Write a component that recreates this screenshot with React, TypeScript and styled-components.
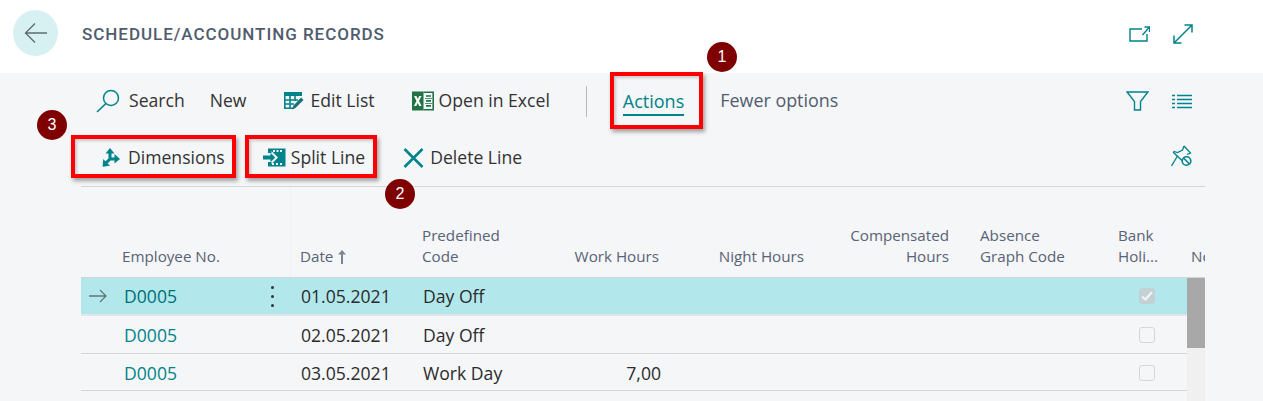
import React from "react";
import styled, { createGlobalStyle } from "styled-components";

const TEAL = "#00838a";
const COLUMNS = "41px 132px 37px 131px 118px 121px 145px 145px 167px 69px";

const GlobalStyle = createGlobalStyle`
  html, body {
    margin: 0;
    padding: 0;
    background: #f5f6f8;
  }
  body {
    font-family: "Open Sans", "Liberation Sans", sans-serif;
    overflow: hidden;
  }
`;

const Page = styled.div`
  position: relative;
  width: 1263px;
  height: 401px;
  overflow: hidden;
  background: #f5f6f8;
`;

const Header = styled.header`
  display: flex;
  align-items: center;
  height: 73px;
  padding: 0 70px 0 13px;
  box-sizing: border-box;
  background: #fff;
`;

const BackButton = styled.div`
  display: flex;
  align-items: center;
  justify-content: center;
  width: 45px;
  height: 46px;
  margin-top: -8px;
  border-radius: 50%;
  background: #d7f0f2;
`;

const Title = styled.h1`
  flex: 1;
  margin: -5px 0 0 24px;
  font-family: Roboto, "Liberation Sans", sans-serif;
  font-size: 17px;
  font-weight: 500;
  letter-spacing: 0.96px;
  color: #505c6d;
`;

const HeaderIcons = styled.div`
  display: flex;
  align-items: center;
  gap: 23px;
  margin-top: -6px;
`;

const CommandBar = styled.div`
  margin-left: 81px;
  width: 1124px;
  border-bottom: 1px solid #d4d6da;
`;

const CommandRow = styled.div<{ $height: number }>`
  display: flex;
  align-items: center;
  height: ${({ $height }) => $height}px;
`;

const Command = styled.div<{ $ml: number; $gap?: number }>`
  display: flex;
  align-items: center;
  gap: ${({ $gap }) => $gap ?? 7}px;
  margin-left: ${({ $ml }) => $ml}px;
  font-size: 17.6px;
  color: #323232;
  white-space: nowrap;
`;

const Label = styled.span`
  margin-top: -2px;
`;

const Separator = styled.div`
  width: 1px;
  height: 31px;
  margin-left: 36px;
  background: #b4bac0;
`;

const ActionsTab = styled.div`
  margin-left: 36px;
  padding: 2px 0 1px;
  font-size: 18px;
  color: ${TEAL};
  border-bottom: 2px solid ${TEAL};
`;

const MutedCommand = styled.div`
  margin: -2px 0 0 36px;
  font-size: 17.9px;
  color: #505c6d;
`;

const RightIcons = styled.div<{ $lift?: number }>`
  display: flex;
  align-items: center;
  gap: 23px;
  margin-left: auto;
  margin-right: 13px;
  margin-top: ${({ $lift }) => -($lift ?? 0)}px;
`;

const GridRow = styled.div`
  display: grid;
  grid-template-columns: ${COLUMNS};
  width: 1106px;
`;

const TableHead = styled(GridRow)`
  width: 1124px;
  height: 91px;
  align-items: end;
  grid-template-columns: ${COLUMNS} 18px;
  border-bottom: 1px solid #d4d6da;
  box-sizing: border-box;
  margin-left: 81px;
`;

const HeadCell = styled.div<{ $right?: boolean; $pl?: number }>`
  padding: 0 ${({ $right }) => ($right ? 2 : 0)}px 10px ${({ $pl }) => $pl ?? 0}px;
  font-size: 15.2px;
  line-height: 21px;
  color: #586375;
  text-align: ${({ $right }) => ($right ? "right" : "left")};
  white-space: pre-line;
  overflow: hidden;
`;

const SortedHead = styled(HeadCell)`
  display: flex;
  align-items: center;
  gap: 5px;
`;

const SpacerHead = styled.div`
  align-self: stretch;
  border-right: 1px solid #f0f1f3;
`;

const TableBody = styled.div`
  display: flex;
  margin-left: 81px;
`;

const Rows = styled.div`
  width: 1106px;
`;

const DataRow = styled(GridRow)<{ $selected?: boolean; $height: number }>`
  height: ${({ $height }) => $height}px;
  box-sizing: border-box;
  align-items: center;
  background: ${({ $selected }) => ($selected ? "#b2e8ec" : "transparent")};
  border-bottom: ${({ $selected }) => ($selected ? "2px solid #dfe7ea" : "1px solid #d4d6da")};

  &:last-child {
    padding-top: 2px;
  }
`;

const ArrowCell = styled.div`
  display: flex;
  justify-content: center;
  padding-right: 7px;
`;

const LinkCell = styled.div<{ $selected?: boolean }>`
  padding-left: 2px;
  font-size: 17.6px;
  color: ${({ $selected }) => ($selected ? "#006f75" : TEAL)};
`;

const DotsCell = styled.div`
  display: flex;
  flex-direction: column;
  align-items: center;
  gap: 6px;
`;

const Dot = styled.span`
  width: 3px;
  height: 3px;
  border-radius: 50%;
  background: #333;
`;

const Cell = styled.div<{ $right?: boolean; $pl?: number }>`
  padding-left: ${({ $pl }) => $pl ?? 0}px;
  font-size: 17.6px;
  color: #2b2b2b;
  text-align: ${({ $right }) => ($right ? "right" : "left")};
`;

const CheckCell = styled.div`
  display: flex;
  padding-left: 21px;
`;

const CheckBox = styled.div<{ $checked?: boolean }>`
  display: flex;
  align-items: center;
  justify-content: center;
  width: 16px;
  height: 16px;
  box-sizing: border-box;
  border-radius: 3px;
  border: 1.5px solid ${({ $checked }) => ($checked ? "#c3d1d4" : "#d5d6d8")};
  background: ${({ $checked }) => ($checked ? "#c3d1d4" : "transparent")};
`;

const ScrollTrack = styled.div`
  width: 18px;
  height: 124px;
  background: #f0f0f0;
`;

const ScrollThumb = styled.div`
  height: 70px;
  background: #a8a8a8;
`;

const Highlight = styled.div<{ $x: number; $y: number; $w: number; $h: number }>`
  position: absolute;
  left: ${({ $x }) => $x}px;
  top: ${({ $y }) => $y}px;
  width: ${({ $w }) => $w}px;
  height: ${({ $h }) => $h}px;
  box-sizing: border-box;
  border: 4px solid #f00;
  box-shadow: 2px 3px 4px rgba(0, 0, 0, 0.35), inset 2px 2px 3px rgba(0, 0, 0, 0.18);
`;

const Badge = styled.div<{ $x: number; $y: number }>`
  position: absolute;
  left: ${({ $x }) => $x}px;
  top: ${({ $y }) => $y}px;
  width: 30px;
  height: 30px;
  display: flex;
  align-items: center;
  justify-content: center;
  border-radius: 50%;
  background: #7f0000;
  color: #fff;
  font-family: "Liberation Sans", sans-serif;
  font-size: 16px;
`;

const Icon = styled.svg`
  display: block;
  flex: none;
`;

const BackIcon = () => (
  <Icon width="23" height="22" viewBox="0 0 23 22" fill="none" stroke="#5f6b70" strokeWidth="1.3">
    <path d="M1.5 11 H23 M11 1.5 L1.5 11 L11 20.5" />
  </Icon>
);

const SearchIcon = () => (
  <Icon width="24" height="24" viewBox="0 0 24 24" fill="none" stroke={TEAL} strokeWidth="1.5">
    <circle cx="15" cy="9" r="7.5" />
    <path d="M9.8 14.6 L1 23" />
  </Icon>
);

const EditListIcon = () => (
  <Icon width="21" height="20" viewBox="0 0 21 20">
    <path fill={TEAL} d="M1 1 H19 V5 H1 Z" />
    <path
      fill="none"
      stroke={TEAL}
      strokeWidth="1.6"
      d="M1.8 5 V17.2 H11 M7 5 V17 M12 5 V10 M1.8 9 H15 M1.8 13 H11"
    />
    <path fill="#1d6f78" d="M18 6.5 L20.5 9 L12.5 17 L9 18.5 L10.5 14.5 Z" />
  </Icon>
);

const ExcelIcon = () => (
  <Icon width="23" height="20" viewBox="0 0 23 20">
    <path fill="#217346" d="M1 0.5 H12.5 V19.5 H1 Z" />
    <path fill="#fff" d="M3 5 H5.4 L6.8 8 L8.2 5 H10.5 L8 10 L10.6 15 H8.2 L6.7 12 L5.2 15 H2.9 L5.5 10 Z" />
    <path fill="none" stroke="#217346" strokeWidth="1.6" d="M12.5 1.3 H22.2 V18.7 H12.5" />
    <path fill="#217346" d="M15 4.2 H20 V5.8 H15 Z M15 9 H20 V10.8 H15 Z M15 14 H20 V15.8 H15 Z M14 7 H21 V7.8 H14 Z M14 12 H21 V12.8 H14 Z" />
  </Icon>
);

const DimensionsIcon = () => (
  <Icon width="18" height="19" viewBox="0 0 18 19" fill={TEAL}>
    <path d="M8 0 L12.5 5.4 H3.5 Z" />
    <path d="M12.5 6 L18 11 L12.5 15.5 Z" />
    <path d="M0.6 18.8 L1.2 11 L8 17.8 Z" />
    <path fill="none" stroke={TEAL} strokeWidth="3" d="M8 4 V11 L14 11 M8 11 L3 15.8" />
  </Icon>
);

const SplitLineIcon = () => (
  <Icon width="23" height="19" viewBox="0 0 23 19">
    <path
      fill={TEAL}
      fillRule="evenodd"
      d="M5 0.5 H22.5 V18.5 H5 Z M10 2 V4 H12 V2 Z M13.5 2 V4 H15.5 V2 Z M17 2 V4 H19 V2 Z M9 15 V17 H11 V15 Z M13 15 V17 H15 V15 Z M17 15 V17 H19 V15 Z"
    />
    <path fill="#f5f6f8" d="M5 5 H8.5 V3 L15 9.5 L8.5 16 V14 H5 Z" />
    <path fill={TEAL} d="M0 7.5 H7.5 V4.8 L12.2 9.5 L7.5 14.2 V11.5 H0 Z" />
  </Icon>
);

const DeleteIcon = () => (
  <Icon width="21" height="20" viewBox="0 0 21 20" fill="none" stroke={TEAL} strokeWidth="2.6">
    <path d="M1.5 1 L19.5 19 M19.5 1 L1.5 19" />
  </Icon>
);

const OpenNewIcon = () => (
  <Icon width="21" height="16" viewBox="0 0 21 16" fill="none" stroke={TEAL} strokeWidth="1.4">
    <path d="M13 3 H1 V15 H18 V8" />
    <path d="M13.5 9 L20 1.5 M15.5 1 H20.5 V6" />
  </Icon>
);

const ExpandIcon = () => (
  <Icon width="20" height="20" viewBox="0 0 20 20" fill="none" stroke={TEAL} strokeWidth="1.5">
    <path d="M1 19 L19 1 M11.5 1 H19 V8.5 M1 11.5 V19 H8.5" />
  </Icon>
);

const FilterIcon = () => (
  <Icon width="23" height="20" viewBox="0 0 23 20" fill="none" stroke={TEAL} strokeWidth="1.4">
    <path d="M1 1 H22 L14.5 10.5 V19 H8.5 V10.5 Z" />
  </Icon>
);

const ListIcon = () => (
  <Icon width="20" height="15" viewBox="0 0 20 15" fill="none" stroke={TEAL} strokeWidth="1.3">
    <path d="M0 1.5 H3 M5 1.5 H20 M0 5.5 H3 M5 5.5 H20 M0 9.5 H3 M5 9.5 H20 M0 13.5 H3 M5 13.5 H20" />
  </Icon>
);

const PinIcon = () => (
  <Icon width="21" height="22" viewBox="0 0 21 22" fill="none" stroke={TEAL} strokeWidth="1.3">
    <path d="M13 1 L19.5 8 L16 9.5 M13 1 L11.5 5 L6.5 7.5 L3 6.5 L2.5 7.5 L11 15.5" />
    <path d="M6.5 11 L0.5 21" />
    <circle cx="15.5" cy="16" r="4.3" strokeWidth="1.6" />
    <path d="M12.5 13 L18.5 19" strokeWidth="1.6" />
  </Icon>
);

const CheckMark = () => (
  <Icon width="12" height="10" viewBox="0 0 12 10" fill="none" stroke="#f0f5f5" strokeWidth="2.2">
    <path d="M1 5.5 L4.5 8.5 L11 1" />
  </Icon>
);

const RowArrow = () => (
  <Icon width="18" height="14" viewBox="0 0 18 14" fill="none" stroke="#62757a" strokeWidth="1.3">
    <path d="M0 7 H17 M11 1 L17 7 L11 13" />
  </Icon>
);

const SortArrow = () => (
  <Icon width="8" height="14" viewBox="0 0 8 14" fill="#7b8694">
    <path d="M4 0 L8 4.5 H5 V14 H3 V4.5 H0 Z" />
  </Icon>
);

const records = [
  { date: "01.05.2021", code: "Day Off", hours: "", holiday: true, height: 38 },
  { date: "02.05.2021", code: "Day Off", hours: "", holiday: false, height: 38 },
  { date: "03.05.2021", code: "Work Day", hours: "7,00", holiday: false, height: 37 },
];

const App = () => {
  return (
    <Page>
      <GlobalStyle />
      <Header>
        <BackButton>
          <BackIcon />
        </BackButton>
        <Title>SCHEDULE/ACCOUNTING RECORDS</Title>
        <HeaderIcons>
          <OpenNewIcon />
          <ExpandIcon />
        </HeaderIcons>
      </Header>

      <CommandBar>
        <CommandRow $height={56}>
          <Command $ml={15} $gap={9}>
            <SearchIcon />
            <Label>Search</Label>
          </Command>
          <Command $ml={25}>
            <Label>New</Label>
          </Command>
          <Command $ml={37} $gap={6}>
            <EditListIcon />
            <Label>Edit List</Label>
          </Command>
          <Command $ml={36} $gap={5}>
            <ExcelIcon />
            <Label>Open in Excel</Label>
          </Command>
          <Separator />
          <ActionsTab>Actions</ActionsTab>
          <MutedCommand>Fewer options</MutedCommand>
          <RightIcons>
            <FilterIcon />
            <ListIcon />
          </RightIcons>
        </CommandRow>
        <CommandRow $height={57}>
          <Command $ml={21} $gap={8}>
            <DimensionsIcon />
            <Label>Dimensions</Label>
          </Command>
          <Command $ml={38} $gap={5}>
            <SplitLineIcon />
            <Label>Split Line</Label>
          </Command>
          <Command $ml={38} $gap={6}>
            <DeleteIcon />
            <Label>Delete Line</Label>
          </Command>
          <RightIcons $lift={3}>
            <PinIcon />
          </RightIcons>
        </CommandRow>
      </CommandBar>

      <TableHead>
        <HeadCell />
        <HeadCell>Employee No.</HeadCell>
        <SpacerHead />
        <SortedHead $pl={9}>
          Date
          <SortArrow />
        </SortedHead>
        <HeadCell>{"Predefined\nCode"}</HeadCell>
        <HeadCell $right>Work Hours</HeadCell>
        <HeadCell $right>Night Hours</HeadCell>
        <HeadCell $right>{"Compensated\nHours"}</HeadCell>
        <HeadCell $pl={29}>{"Absence\nGraph Code"}</HeadCell>
        <HeadCell>{"Bank\nHoli..."}</HeadCell>
        <HeadCell $pl={4}>No.</HeadCell>
      </TableHead>

      <TableBody>
        <Rows>
          {records.map((record, index) => (
            <DataRow key={record.date} $selected={index === 0} $height={record.height}>
              <ArrowCell>{index === 0 && <RowArrow />}</ArrowCell>
              <LinkCell $selected={index === 0}>D0005</LinkCell>
              <DotsCell>
                {index === 0 && (
                  <>
                    <Dot />
                    <Dot />
                    <Dot />
                  </>
                )}
              </DotsCell>
              <Cell $pl={10}>{record.date}</Cell>
              <Cell $pl={1}>{record.code}</Cell>
              <Cell $right>{record.hours}</Cell>
              <Cell />
              <Cell />
              <Cell />
              <CheckCell>
                <CheckBox $checked={record.holiday}>{record.holiday && <CheckMark />}</CheckBox>
              </CheckCell>
            </DataRow>
          ))}
        </Rows>
        <ScrollTrack>
          <ScrollThumb />
        </ScrollTrack>
      </TableBody>

      <Highlight $x={610} $y={72} $w={93} $h={57} />
      <Highlight $x={71} $y={135} $w={165} $h={43} />
      <Highlight $x={245} $y={135} $w={132} $h={43} />
      <Badge $x={707} $y={42}>1</Badge>
      <Badge $x={385} $y={179}>2</Badge>
      <Badge $x={37} $y={110}>3</Badge>
    </Page>
  );
};

export default App;
